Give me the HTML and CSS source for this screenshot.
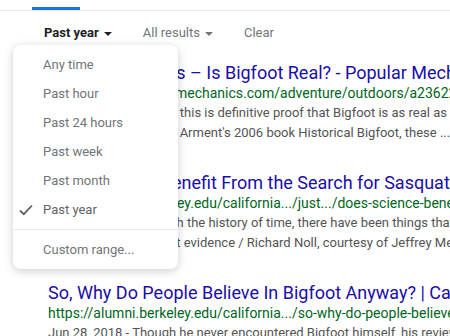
FILE: index.html
```html
<!DOCTYPE html>
<html>
<head>
<meta charset="utf-8">
<link rel="stylesheet" href="styles.css">
</head>
<body>
<div class="page">
  <div class="tabs"><div class="tab-ind"></div></div>
  <div class="tools">
    <span class="tool active">Past year<span class="caret"></span></span>
    <span class="tool">All results<span class="caret"></span></span>
    <span class="tool">Clear</span>
  </div>
  <div class="results">
    <div class="result">
      <div class="title">Bigfoot Sightings – Is Bigfoot Real? - Popular Mechanics</div>
      <div class="url">https://www.popularmechanics.com/adventure/outdoors/a23622437/bigfoot</div>
      <div class="snippet">Some people declared this is definitive proof that Bigfoot is as real as you and me.</div>
      <div class="snippet">According to Mr. Chad Arment's 2006 book Historical Bigfoot, these ...</div>
    </div>
    <div class="result">
      <div class="title">Does Science Benefit From the Search for Sasquatch?</div>
      <div class="url">https://alumni.berkeley.edu/california.../just.../does-science-benefit</div>
      <div class="snippet">Indeed, now, all through the history of time, there have been things that</div>
      <div class="snippet">Many believe it without evidence / Richard Noll, courtesy of Jeffrey Meldrum</div>
    </div>
    <div class="result">
      <div class="title">So, Why Do People Believe In Bigfoot Anyway? | California</div>
      <div class="url">https://alumni.berkeley.edu/california.../so-why-do-people-believe-bigfoot</div>
      <div class="snippet">Jun 28, 2018 - Though he never encountered Bigfoot himself, his review</div>
    </div>
  </div>
  <div class="menu">
    <div class="item">Any time</div>
    <div class="item">Past hour</div>
    <div class="item">Past 24 hours</div>
    <div class="item">Past week</div>
    <div class="item">Past month</div>
    <div class="item selected"><svg class="check" width="14" height="12" viewBox="0 0 14 12"><path d="M1 6.5 L4.8 10.2 L13 1.5" fill="none" stroke="#5f6368" stroke-width="1.8"/></svg>Past year</div>
    <div class="divider"></div>
    <div class="item">Custom range...</div>
  </div>
</div>
</body>
</html>
```
FILE: styles.css
```css
* { box-sizing: border-box; }
html, body { margin: 0; padding: 0; background: #fff; }
body { font-family: Roboto, "Liberation Sans", Arial, sans-serif; width: 450px; height: 336px; overflow: hidden; }
.page { position: relative; width: 450px; height: 336px; overflow: hidden; }
.tabs { height: 11px; border-bottom: 1px solid #ebebeb; padding-top: 7px; padding-left: 32px; }
.tab-ind { width: 48px; height: 3px; background: #1a73e8; }
.tools { display: flex; gap: 31px; padding: 14px 0 0 44px; font-size: 13px; line-height: 16px; color: #70757a; white-space: nowrap; }
.tool { display: inline-flex; align-items: center; height: 16px; }
.tool.active { color: #202124; font-weight: bold; }
.caret { display: inline-block; margin-left: 5px; margin-top: 1px; width: 0; height: 0; border-left: 4px solid transparent; border-right: 4px solid transparent; border-top: 4px solid currentColor; }
.results { padding: 20px 0 0 48px; white-space: nowrap; }
.result + .result { margin-top: 28px; }
.title { font-size: 18px; line-height: 24px; color: #1a0dab; }
.url { font-size: 14px; line-height: 16px; color: #006621; }
.snippet { font-size: 13px; line-height: 20px; color: #545454; }
.url + .snippet { margin-top: 2px; }
.menu { position: absolute; left: 13px; top: 45px; width: 165px; height: 224px; background: #fff; border-radius: 8px; box-shadow: 0 2px 10px rgba(0,0,0,0.2); padding: 5px 0; }
.item { position: relative; height: 29px; line-height: 29px; padding-left: 30px; font-size: 13px; color: #70757a; white-space: nowrap; }
.item.selected { color: #5f6368; }
.check { position: absolute; left: 6px; top: 9px; }
.divider { height: 1px; background: #ebebeb; margin: 5px 0; }
```
